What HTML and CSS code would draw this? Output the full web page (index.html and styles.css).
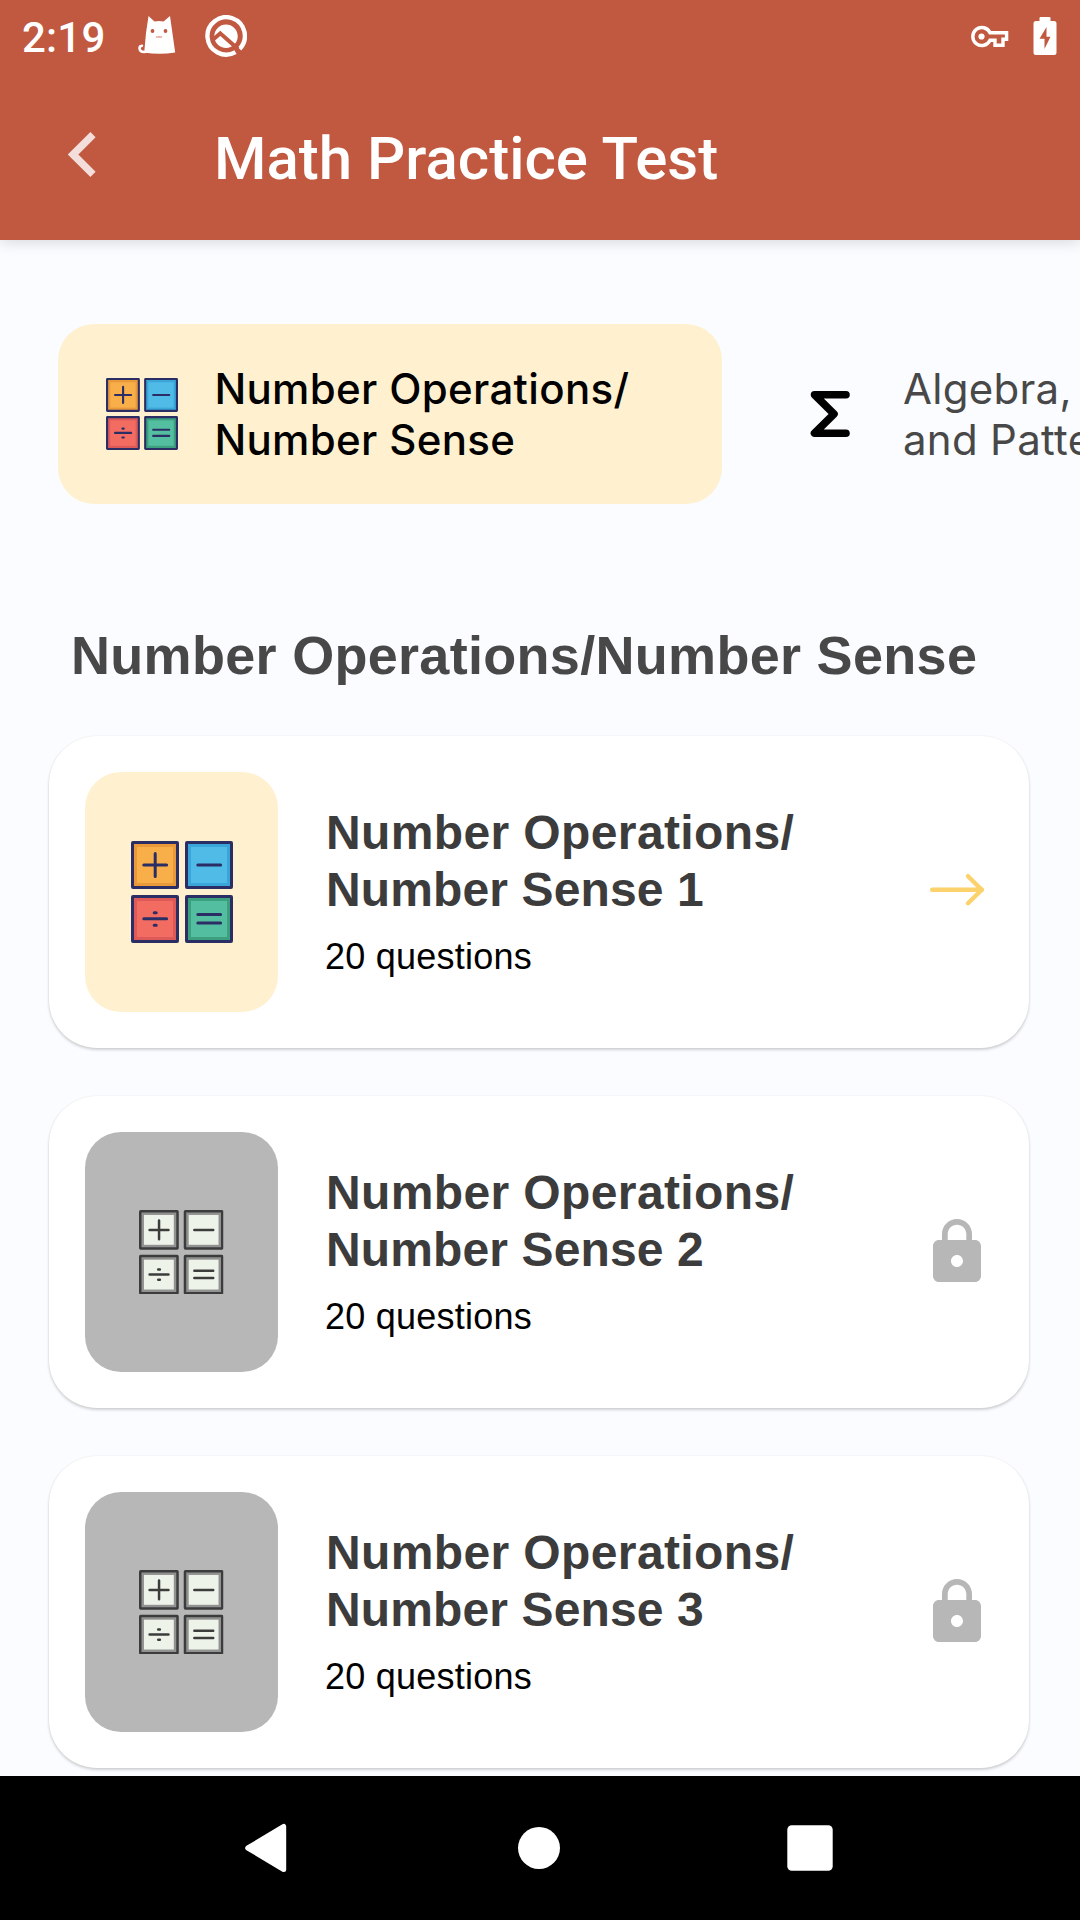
FILE: index.html
```html
<!DOCTYPE html>
<html lang="en">
<head>
<meta charset="utf-8">
<title>Math Practice Test</title>
<link rel="stylesheet" href="styles.css">
</head>
<body>
<svg class="sprite" aria-hidden="true">
  <symbol id="ops" viewBox="0 0 102 102">
    <rect class="band band-a" x="1.5" y="1.5" width="45" height="45" rx=".5"/>
    <rect class="band band-b" x="55.5" y="1.5" width="45" height="45" rx=".5"/>
    <rect class="band band-c" x="1.5" y="55.5" width="45" height="45" rx=".5"/>
    <rect class="band band-d" x="55.5" y="55.5" width="45" height="45" rx=".5"/>
    <rect class="face-a" x="6" y="6" width="36" height="36"/>
    <rect class="face-b" x="60" y="6" width="36" height="36"/>
    <rect class="face-c" x="6" y="60" width="36" height="36"/>
    <rect class="face-d" x="60" y="60" width="36" height="36"/>
    <path class="glyph" d="M12.800 24h22.800M24.200 12.600v22.800M66.800 24h22.800M12.800 77.800h22.800M23.200 71.700h2M23.200 84.200h2M66.800 73.400h22.800M66.800 82h22.800"/>
  </symbol>
  <symbol id="lock" viewBox="0 0 24 24">
    <path d="M18 8h-1V6c0-2.760-2.240-5-5-5S7 3.240 7 6v2H6c-1.100 0-2 .9-2 2v10c0 1.100.9 2 2 2h12c1.100 0 2-.9 2-2V10c0-1.100-.9-2-2-2zm-6 9c-1.100 0-2-.9-2-2s.9-2 2-2 2 .9 2 2-.9 2-2 2zm3.100-9H8.900V6c0-1.710 1.390-3.100 3.100-3.100 1.710 0 3.100 1.390 3.100 3.100v2z"/>
  </symbol>
</svg>

<header class="header">
  <div class="status">
    <span class="time">2:19</span>
    <svg class="cat" viewBox="0 0 38 40">
      <path fill="#fff" d="M10.500 1l6 5.500q4.500-1 9 0L32 1l5.200 36.500q-16 2.500-31 0L8 18z"/>
      <path d="M8 36.800Q2 37.500 1.500 33.500 1.300 31 4 30.700" fill="none" stroke="#fff" stroke-width="2.500" stroke-linecap="round"/>
      <circle cx="14.500" cy="16" r="1.900" fill="#c15840"/><circle cx="27.500" cy="16" r="1.900" fill="#c15840"/>
      <path d="M18 21.600q1.500 1 3 0 1.500 1 3 0" fill="none" stroke="#e0a79b" stroke-width="1.400"/>
    </svg>
    <svg class="qicon" viewBox="0 0 42 42">
      <path d="M30.500 37.100A18.700 18.700 0 1 1 34.600 33.900" fill="none" stroke="#fff" stroke-width="4.400"/>
      <circle cx="21" cy="21.200" r="11.700" fill="#fff"/>
      <path d="M7 25.500L15.300 18.300 33 34" fill="none" stroke="#c15840" stroke-width="4"/>
    </svg>
    <span class="spacer"></span>
    <svg class="key" viewBox="0 0 38 24">
      <path fill="none" stroke="#fff" stroke-width="3.400" d="M19 7.800A9 9 0 1 0 19 15.200H24V20.200H32V14.200H35.600V7.800Z"/>
      <circle cx="10.500" cy="11.500" r="3.100" fill="#fff"/>
    </svg>
    <svg class="battery" viewBox="0 0 24 40">
      <path fill="#fff" d="M7.500 1h9q1 0 1 1v3H21q2.500 0 2.500 2.500v29Q23.500 39 21 39H3Q.5 39 .5 36.500v-29Q.5 5 3 5h3.500V2q0-1 1-1z"/>
      <path fill="#c15840" d="M13.500 11L6.500 22.800h5V33l6-12.300h-4z"/>
    </svg>
  </div>
  <div class="bar">
    <svg class="back" viewBox="0 0 28 45"><path d="M25 2.700L5 22.500 25 42.300" fill="none" stroke="#f3dedb" stroke-width="7.400"/></svg>
    <h1>Math Practice Test</h1>
  </div>
</header>

<main class="content">
  <nav class="tabs">
    <div class="tab active">
      <svg class="tab-ops color"><use href="#ops"/></svg>
      <span>Number Operations/<br>Number Sense</span>
    </div>
    <div class="tab">
      <svg class="sigma" viewBox="0 0 40 48"><path d="M36 4.700H4.500L24 24 4.500 43.300H36" fill="none" stroke="#000" stroke-width="7.600" stroke-linecap="round" stroke-linejoin="round"/></svg>
      <span>Algebra, Functions<br>and Patterns</span>
    </div>
  </nav>

  <h2>Number Operations/Number Sense</h2>

  <section class="cards">
    <article class="card">
      <div class="thumb"><svg class="card-ops color"><use href="#ops"/></svg></div>
      <div class="info"><h3>Number Operations/<br><span class="second">Number Sense 1</span></h3><p>20 questions</p></div>
      <svg class="action" viewBox="0 0 72 72"><path d="M11.200 33.700H61M47 20.200L60.800 33.700 47 47.200" fill="none" stroke="#fbd26b" stroke-width="4.400" stroke-linecap="round" stroke-linejoin="round"/></svg>
    </article>
    <article class="card">
      <div class="thumb locked"><svg class="card-ops grey"><use href="#ops"/></svg></div>
      <div class="info"><h3>Number Operations/<br><span class="second">Number Sense 2</span></h3><p>20 questions</p></div>
      <svg class="action"><use href="#lock"/></svg>
    </article>
    <article class="card">
      <div class="thumb locked"><svg class="card-ops grey"><use href="#ops"/></svg></div>
      <div class="info"><h3>Number Operations/<br><span class="second">Number Sense 3</span></h3><p>20 questions</p></div>
      <svg class="action"><use href="#lock"/></svg>
    </article>
  </section>
</main>

<footer class="navbar">
  <svg viewBox="0 0 50 50"><path d="M6 25L42 3.500V46.500Z" transform="translate(-1.300 0)" fill="#fff" stroke="#fff" stroke-width="5" stroke-linejoin="round"/></svg>
  <svg viewBox="0 0 50 50"><circle cx="25" cy="25" r="21" fill="#fff"/></svg>
  <svg viewBox="0 0 50 50"><rect x="2.300" y="2.300" width="45.400" height="45.400" rx="4.500" fill="#fff"/></svg>
</footer>
</body>
</html>
```
FILE: styles.css
```css
* { box-sizing: border-box; margin: 0; padding: 0; }

body {
  width: 1080px;
  height: 1920px;
  overflow: hidden;
  display: flex;
  flex-direction: column;
  background: #fbfcff;
  font-family: "Liberation Sans", sans-serif;
}

svg { display: block; flex: none; }
.sprite { display: none; }

/* Header */
.header {
  height: 240px;
  flex: none;
  background: #c15840;
  color: #fff;
  font-family: Roboto, sans-serif;
  box-shadow: 0 2px 14px rgba(0, 0, 0, .15);
  z-index: 1;
}
.status { height: 72px; display: flex; align-items: center; padding: 0 23.500px 0 22px; }
.time { font-size: 42px; font-weight: 500; line-height: 48px; width: 116px; margin-top: 3px; letter-spacing: .2px; }
.cat { width: 38px; height: 40px; margin-top: -2px; }
.qicon { width: 42px; height: 42px; margin-left: 28.500px; margin-top: -1px; }
.spacer { flex: 1; }
.key { width: 38px; height: 24px; margin-right: 24px; margin-top: 2px; }
.battery { width: 24px; height: 40px; margin-top: -1px; }

.bar { height: 168px; display: flex; padding-left: 67.500px; }
.back { width: 28px; height: 45px; margin-top: 60px; }
h1 { margin: 52px 0 0 118.500px; font-size: 60px; line-height: 70px; font-weight: 500; }

/* Content */
.content { flex: 1; min-height: 0; overflow: hidden; padding-top: 84px; }

.tabs { display: flex; gap: 24px; padding-left: 58.400px; }
.tab {
  flex: none;
  width: 664px;
  height: 180px;
  border-radius: 36px;
  display: flex;
  align-items: center;
  padding-left: 48px;
  font: 400 42px/51px Inter, sans-serif;
  letter-spacing: .3px;
  color: #484848;
}
.tab.active { background: #fff0cf; color: #000; font-weight: 500; letter-spacing: .34px; }
.tab span { white-space: nowrap; }
.tab-ops { width: 72px; height: 72px; margin-right: 36px; }
.sigma { width: 40px; height: 48px; margin: 0 52.500px 0 16px; }

h2 { margin: 118px 0 0 71px; font-size: 54px; line-height: 66px; color: #484848; letter-spacing: .3px; white-space: nowrap; }

.cards { margin-top: 48px; padding: 0 51px 0 49px; display: flex; flex-direction: column; gap: 48px; }
.card {
  height: 312px;
  flex: none;
  border-radius: 48px;
  background: #fff;
  box-shadow: 0 2px 3px rgba(0, 0, 0, .17), 0 0 2px rgba(0, 0, 0, .08);
  display: flex;
  align-items: center;
  padding: 0 36px;
}
.thumb { width: 193px; height: 240px; border-radius: 36px; background: #fff0cf; display: flex; align-items: center; justify-content: center; }
.thumb.locked { background: #b7b7b7; }
.card-ops { width: 102px; height: 102px; }
.card-ops.grey { width: 84.500px; height: 84.500px; }
.info { flex: 1; margin-left: 47px; }
h3 { font-size: 48px; line-height: 57px; margin: -1px 0 0 1px; color: #3c3c3c; letter-spacing: .38px; }
.second { letter-spacing: .12px; }
.info p { font-size: 36px; line-height: 44px; margin-top: 17px; color: #000; letter-spacing: .24px; }
.action { width: 72px; height: 72px; fill: #b7b7b7; }

/* Operation tiles */
.color { --line: #2b2e64; --a1: #e9993a; --a2: #f8ae49; --b1: #3aa5d9; --b2: #4fbbe6; --c1: #dd5a58; --c2: #f26c62; --d1: #3c9f7d; --d2: #54bfa0; }
.grey { --line: #3c3c3c; --a1: #929292; --b1: #929292; --c1: #929292; --d1: #929292; --a2: #edf3e8; --b2: #edf3e8; --c2: #edf3e8; --d2: #edf3e8; }
.band { stroke: var(--line); stroke-width: 3; }
.band-a { fill: var(--a1); }
.band-b { fill: var(--b1); }
.band-c { fill: var(--c1); }
.band-d { fill: var(--d1); }
.face-a { fill: var(--a2); }
.face-b { fill: var(--b2); }
.face-c { fill: var(--c2); }
.face-d { fill: var(--d2); }
.glyph { fill: none; stroke: var(--line); stroke-width: 3; stroke-linecap: round; }

/* System navigation */
.navbar {
  height: 144px;
  flex: none;
  background: #000;
  display: flex;
  align-items: center;
  justify-content: space-between;
  padding: 0 245px 0 243px;
}
.navbar svg { width: 50px; height: 50px; }
```
